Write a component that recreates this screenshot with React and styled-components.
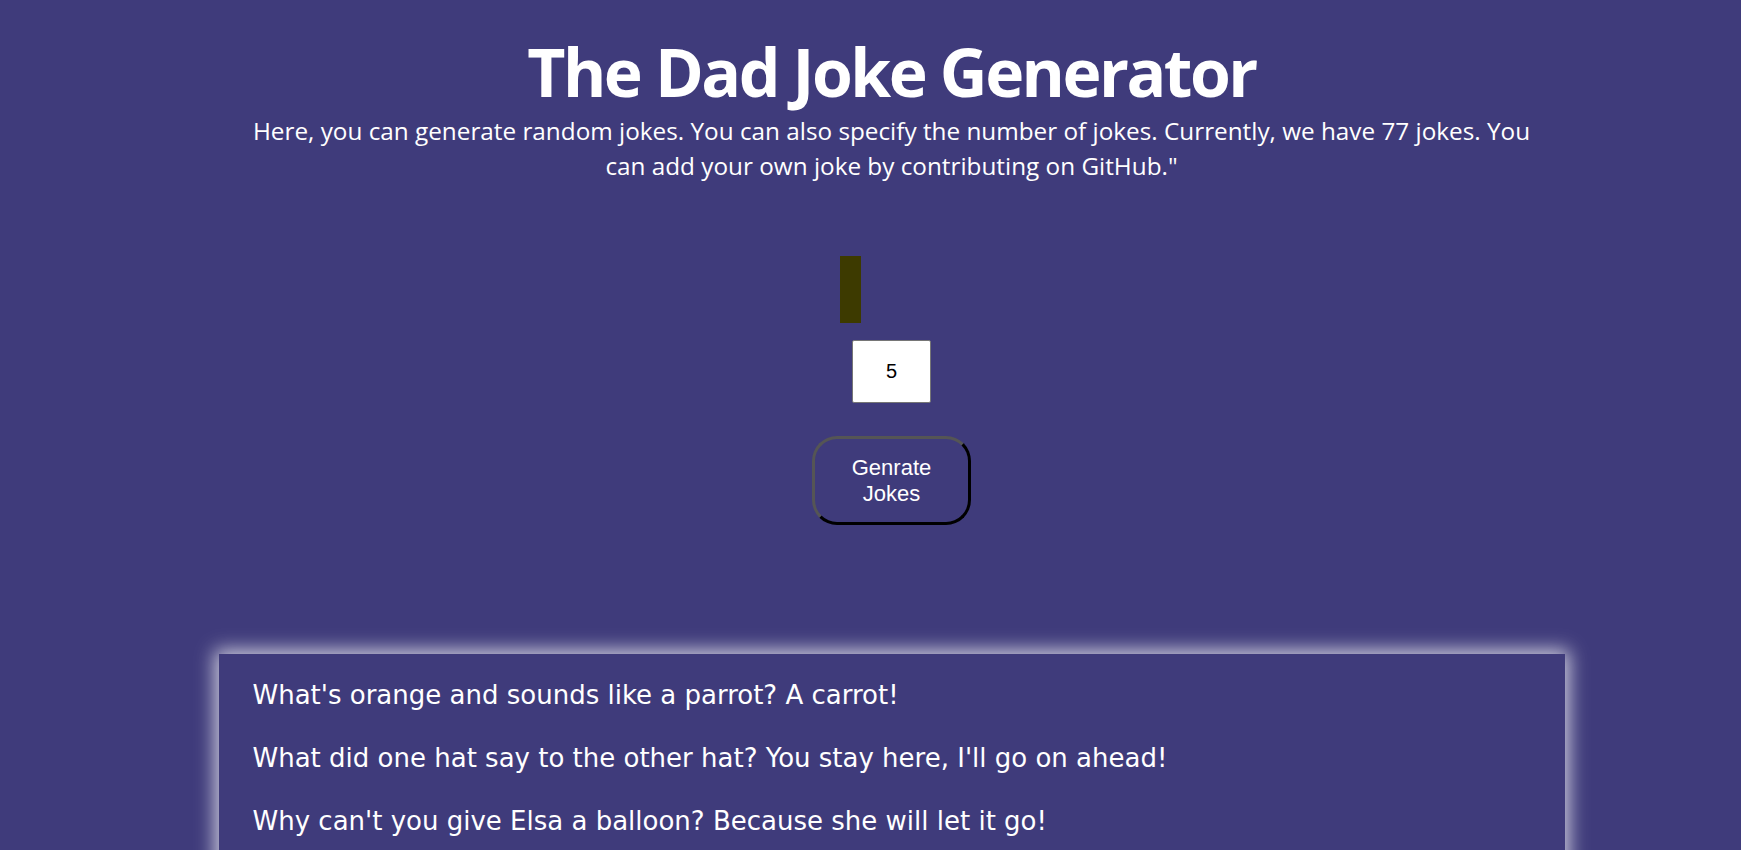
import React, { useState } from 'react';
import styled, { createGlobalStyle } from 'styled-components';

const GlobalStyle = createGlobalStyle`
  body {
    margin: 0;
    background: #3f3b7b;
    color: #ffffff;
    font-family: 'Open Sans', sans-serif;
  }
`;

const jokeList = [
  "What's orange and sounds like a parrot? A carrot!",
  "What did one hat say to the other hat? You stay here, I'll go on ahead!",
  "Why can't you give Elsa a balloon? Because she will let it go!",
  'I only know 25 letters of the alphabet. I don\'t know y.',
  'Why did the scarecrow win an award? He was outstanding in his field.',
];

const App = () => {
  const [count, setCount] = useState('5');
  return (
    <Main>
      <GlobalStyle />
      <Header>
        <h1>The Dad Joke Generator</h1>
        <p>
          Here, you can generate random jokes. You can also specify the number of jokes. Currently, we have 77
          jokes. You can add your own joke by contributing on GitHub."
        </p>
      </Header>
      <Controls>
        <Marker />
        <CountInput type='text' value={count} onChange={(e) => setCount(e.target.value)} />
        <GenerateButton>Genrate Jokes</GenerateButton>
      </Controls>
      <JokeBox>
        {jokeList.map((joke) => (
          <Joke key={joke}>{joke}</Joke>
        ))}
      </JokeBox>
    </Main>
  );
};

const Main = styled.div`
  display: flex;
  flex-direction: column;
  align-items: center;
  padding-left: 42px;
`;

const Header = styled.header`
  text-align: center;
  width: 1300px;
  h1 {
    margin: 31px 0 0;
    font-size: 66px;
    line-height: 80px;
    font-weight: 700;
    letter-spacing: -2.5px;
  }
  p {
    margin: 2px 0 0;
    font-size: 24.3px;
    line-height: 35px;
  }
`;

const Controls = styled.div`
  display: flex;
  flex-direction: column;
  align-items: center;
  margin-top: 73px;
`;

const Marker = styled.div`
  width: 21px;
  height: 67px;
  background: #3d3a00;
  margin-right: 82px;
`;

const CountInput = styled.input`
  box-sizing: border-box;
  width: 79px;
  height: 63px;
  margin-top: 17px;
  border: 1px solid #767676;
  border-radius: 2px;
  background: #ffffff;
  text-align: center;
  font-family: 'Liberation Sans', Arial, sans-serif;
  font-size: 20px;
  color: #000000;
`;

const GenerateButton = styled.button`
  box-sizing: border-box;
  width: 159px;
  height: 89px;
  margin-top: 33px;
  padding: 0 24px;
  background: transparent;
  border: 3px solid;
  border-color: #555555 #000000 #000000 #555555;
  border-radius: 25px;
  color: #ffffff;
  font-family: 'Liberation Sans', Arial, sans-serif;
  font-size: 22px;
  line-height: 26px;
  cursor: pointer;
`;

const JokeBox = styled.section`
  box-sizing: border-box;
  width: 1346px;
  margin-top: 129px;
  padding: 27px 34px 30px;
  display: flex;
  flex-direction: column;
  gap: 35px;
  box-shadow: 0 0 18px 4px rgba(255, 255, 255, 0.75);
`;

const Joke = styled.p`
  margin: 0;
  font-family: 'DejaVu Sans', Verdana, sans-serif;
  font-size: 26px;
  line-height: 28px;
`;

export default App;
